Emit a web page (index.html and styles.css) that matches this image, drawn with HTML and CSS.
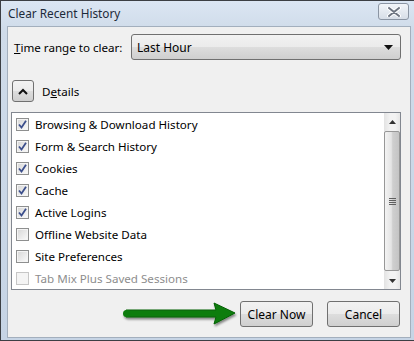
FILE: index.html
```html
<!DOCTYPE html>
<html lang="en">
<head>
    <meta charset="UTF-8">
    <title>Clear Recent History</title>
    <link rel="stylesheet" href="styles.css">
</head>
<body>
    <div class="window">
        <div class="titlebar">
            <span class="title">Clear Recent History</span>
            <button class="close-btn">
                <svg width="14" height="10" viewBox="0 0 14 10">
                    <path d="M2 1 L12 9 M12 1 L2 9" stroke="#fff" stroke-width="4" stroke-linecap="round"/>
                    <path d="M2 1 L12 9 M12 1 L2 9" stroke="#6f7682" stroke-width="2" stroke-linecap="round"/>
                </svg>
            </button>
        </div>

        <div class="client">
            <div class="range-row">
                <label class="range-label"><u>T</u>ime range to clear:</label>
                <div class="select">
                    <span>Last Hour</span>
                    <svg width="9" height="5" viewBox="0 0 9 5"><path d="M0 0 H9 L4.5 5 Z" fill="#111"/></svg>
                </div>
            </div>

            <div class="details-row">
                <button class="details-btn">
                    <svg width="10" height="7" viewBox="0 0 10 7"><path d="M1 6 L5 2 L9 6" fill="none" stroke="#111" stroke-width="2"/></svg>
                </button>
                <span>D<u>e</u>tails</span>
            </div>

            <div class="listbox">
                <div class="items" id="items"></div>
                <div class="scrollbar">
                    <div class="sb-arrow">
                        <svg width="7" height="4" viewBox="0 0 7 4"><path d="M0 4 H7 L3.5 0 Z" fill="#333"/></svg>
                    </div>
                    <div class="sb-thumb">
                        <div class="grip"><i></i><i></i><i></i><i></i></div>
                    </div>
                    <div class="sb-arrow">
                        <svg width="7" height="4" viewBox="0 0 7 4"><path d="M0 0 H7 L3.5 4 Z" fill="#333"/></svg>
                    </div>
                </div>
            </div>

            <div class="button-row">
                <svg class="arrow" width="116" height="28" viewBox="0 0 116 28">
                    <defs>
                        <filter id="sh" x="-10%" y="-30%" width="120%" height="160%">
                            <feDropShadow dx="1" dy="2" stdDeviation="1.2" flood-color="#000" flood-opacity="0.45"/>
                        </filter>
                    </defs>
                    <g filter="url(#sh)">
                        <path d="M4 10 H94 L92 3 L113 13 L92 24 L94 17 H4 Z" fill="#0a7d0a" stroke="#066106" stroke-width="1" stroke-linejoin="round"/>
                        <rect x="1" y="10" width="8" height="7" rx="3.5" fill="#0a7d0a"/>
                    </g>
                </svg>
                <button class="btn">Clear Now</button>
                <button class="btn">Cancel</button>
            </div>
        </div>
    </div>

    <script>
        // elementos de la lista de historial
        const entries = [
            { label: 'Browsing & Download History', checked: true },
            { label: 'Form & Search History', checked: true },
            { label: 'Cookies', checked: true },
            { label: 'Cache', checked: true },
            { label: 'Active Logins', checked: true },
            { label: 'Offline Website Data', checked: false },
            { label: 'Site Preferences', checked: false },
            { label: 'Tab Mix Plus Saved Sessions', checked: false, disabled: true }
        ];

        const check = '<svg width="9" height="9" viewBox="0 0 9 9"><path d="M1 4.5 L3.5 7.5 L8 0.8" fill="none" stroke="#3c4f8c" stroke-width="1.8"/></svg>';

        document.getElementById('items').innerHTML = entries.map(e => `
            <div class="item ${e.disabled ? 'disabled' : ''}">
                <span class="checkbox">${e.checked ? check : ''}</span>
                <span>${e.label.replace('&', '&amp;')}</span>
            </div>
        `).join('');
    </script>
</body>
</html>
```

FILE: styles.css
```css
* {
    margin: 0;
    padding: 0;
    box-sizing: border-box;
}

body {
    font-family: 'Noto Sans', sans-serif;
    font-size: 11.6px;
    color: #000;
    background: #fff;
}

.window {
    width: 414px;
    height: 341px;
    border: 1px solid #3c3f44;
    border-right: none;
    background: linear-gradient(to bottom, #dbe6f3 0, #cfdbe9 30px, #c6d4e5 100%);
    padding: 0 3px 2px 6px;
    display: flex;
    flex-direction: column;
}

.titlebar {
    height: 25px;
    display: flex;
    align-items: center;
    justify-content: space-between;
    padding-left: 1px;
}

.title {
    color: #1d2a3a;
    font-size: 11.8px;
    margin-top: -1px;
}

.close-btn {
    width: 31px;
    height: 17px;
    margin-top: -4px;
    margin-right: 2px;
    border: 1px solid #8b95a3;
    border-radius: 3px;
    background: linear-gradient(to bottom, #f2f5f9, #d7dee7);
    display: flex;
    align-items: center;
    justify-content: center;
}

.client {
    flex: 1;
    background: #f0f0f0;
    border: 1px solid #a3afbd;
    padding: 7px 9px 0 3px;
    display: flex;
    flex-direction: column;
}

.range-row {
    display: flex;
    align-items: center;
    height: 26px;
}

.range-label {
    width: 120px;
    padding-left: 3px;
}

.select {
    flex: 1;
    height: 26px;
    border: 1px solid #707070;
    border-radius: 3px;
    background: linear-gradient(to bottom, #f2f2f2 0, #ebebeb 50%, #dddddd 51%, #cfcfcf 100%);
    display: flex;
    align-items: center;
    justify-content: space-between;
    padding: 0 7px 0 5px;
    font-size: 12px;
}

.details-row {
    display: flex;
    align-items: center;
    gap: 8px;
    margin-top: 20px;
    padding-left: 1px;
}

.details-btn {
    width: 22px;
    height: 22px;
    border: 1px solid #707070;
    border-radius: 3px;
    background: linear-gradient(to bottom, #f2f2f2 0, #ebebeb 50%, #dddddd 51%, #cfcfcf 100%);
    display: flex;
    align-items: center;
    justify-content: center;
}

.listbox {
    margin-top: 10px;
    height: 178px;
    border: 1px solid #828790;
    background: #fff;
    display: flex;
}

.items {
    flex: 1;
}

.item {
    height: 22px;
    display: flex;
    align-items: center;
    gap: 6px;
    padding-left: 4px;
}

.item.disabled {
    color: #8d8d8d;
}

.checkbox {
    width: 13px;
    height: 13px;
    border: 1px solid #8e8f8f;
    background: linear-gradient(135deg, #d6d6d6, #fbfbfb);
    box-shadow: inset 0 0 0 1px #f4f4f4;
    display: flex;
    align-items: center;
    justify-content: center;
}

.item.disabled .checkbox {
    border-color: #c6c6c6;
    background: #f4f4f4;
}

.scrollbar {
    width: 16px;
    background: linear-gradient(to right, #e3e3e3, #f3f3f3 40%, #f3f3f3 70%, #e6e6e6);
    display: flex;
    flex-direction: column;
}

.sb-arrow {
    height: 17px;
    display: flex;
    align-items: center;
    justify-content: center;
}

.sb-thumb {
    flex: 1;
    margin: 1px 0;
    border: 1px solid #979797;
    border-radius: 2px;
    background: linear-gradient(to right, #f3f3f3, #e4e4e4 45%, #cfcfcf 55%, #c4c4c4);
    display: flex;
    align-items: center;
    justify-content: center;
}

.grip {
    display: flex;
    flex-direction: column;
    gap: 1px;
}

.grip i {
    display: block;
    width: 7px;
    height: 1px;
    background: #5f5f5f;
}

.button-row {
    display: flex;
    justify-content: flex-end;
    align-items: center;
    margin-top: 10px;
    padding-right: 1px;
}

.btn {
    flex: none;
    width: 73px;
    height: 26px;
    margin-left: 14px;
    border: 1px solid #707070;
    border-radius: 3px;
    background: linear-gradient(to bottom, #f2f2f2 0, #ebebeb 50%, #dddddd 51%, #cfcfcf 100%);
    font-family: 'Noto Sans', sans-serif;
    font-size: 12px;
    color: #000;
}

.arrow + .btn {
    margin-left: 2px;
}
```
